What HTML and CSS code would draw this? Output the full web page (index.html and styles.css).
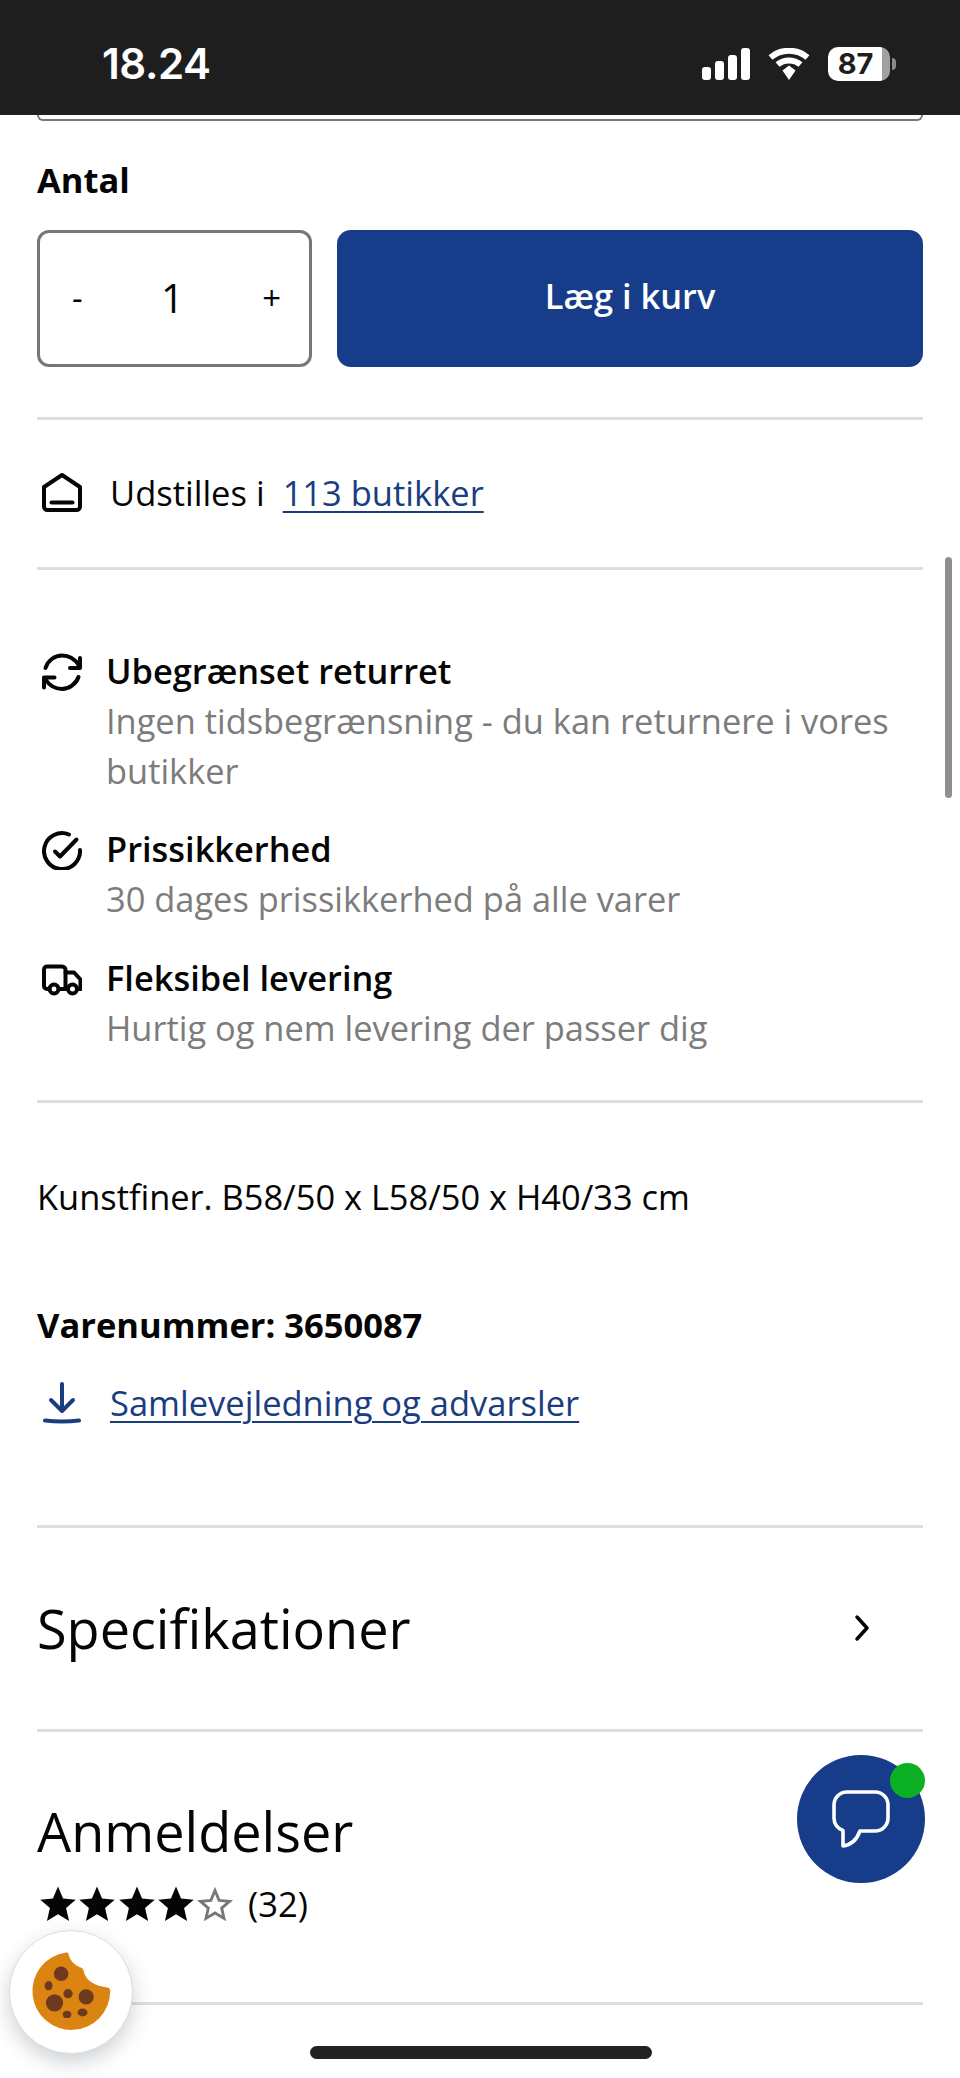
FILE: index.html
```html
<!DOCTYPE html>
<html lang="da">
<head>
<meta charset="utf-8">
<title>Produkt</title>
<link rel="stylesheet" href="styles.css">
</head>
<body>
<div class="phone">
  <header class="status">
    <span class="time">18.24</span>
    <div class="status-icons">
      <svg class="signal" viewBox="0 0 48 32"><rect x="0" y="19" width="9" height="13" rx="3"/><rect x="13" y="13" width="9" height="19" rx="3"/><rect x="26" y="7" width="9" height="25" rx="3"/><rect x="39" y="0" width="9" height="32" rx="3"/></svg>
      <svg class="wifi" viewBox="0 0 42 32"><path d="M2.5 9.5C13 .5 29 .5 39.500 9.500" class="wave"/><path d="M9.500 16.500C16 11 26 11 32.500 16.500" class="wave"/><path d="M14.500 22.500L21 17.500 27.500 22.500 21 32Z" class="wedge"/></svg>
      <div class="battery"><div class="battery-body"><span class="battery-num">87</span></div><span class="battery-nub"></span></div>
    </div>
  </header>

  <main class="content">
    <div class="prev-field"></div>
    <h2 class="qty-label">Antal</h2>
    <div class="buy-row">
      <div class="qty"><span class="qty-btn">-</span><span class="qty-num">1</span><span class="qty-btn">+</span></div>
      <button class="cart">Læg i kurv</button>
    </div>
    <hr class="rule rule-a">
    <div class="stores">
      <svg class="icon icon-home" viewBox="0 0 40 40"><path d="M2 15 20 3 38 15V34.500A3.500 3.500 0 0 1 34.500 38H5.500A3.500 3.500 0 0 1 2 34.500Z"/><path d="M9.500 30.500H30.500"/></svg>
      <span class="stores-text">Udstilles i</span>
      <a class="link stores-link" href="#">113 butikker</a>
    </div>
    <hr class="rule rule-b">
    <ul class="usps">
      <li class="usp">
        <svg class="icon icon-usp" viewBox="0 0 40 40"><path d="M3.500 16C6 8 13 3.500 20 3.500 27 3.500 33 7 37 13.500"/><path d="M38 6V16H28"/><path d="M36.500 25C34 32 27 37 20 37 13 37 7 33 3 27"/><path d="M2 35.500V25.500H12.500"/></svg>
        <div class="usp-body"><div class="usp-title">Ubegrænset returret</div><div class="usp-sub">Ingen tidsbegrænsning - du kan returnere i vores butikker</div></div>
      </li>
      <li class="usp">
        <svg class="icon icon-usp" viewBox="0 0 40 40"><path d="M27 4.500A18 18 0 1 0 38 20"/><path d="M13 21.500 18 26.500 34.500 9.500"/></svg>
        <div class="usp-body"><div class="usp-title">Prissikkerhed</div><div class="usp-sub">30 dages prissikkerhed på alle varer</div></div>
      </li>
      <li class="usp">
        <svg class="icon icon-usp" viewBox="0 0 40 40"><path d="M7.500 30H5A3 3 0 0 1 2 27V10.500A3 3 0 0 1 5 7.500H20A3.500 3.500 0 0 1 23.500 11V30H16.500"/><path d="M23.500 13.500H32L38.500 20.500V30H35"/><circle cx="12" cy="30" r="4.500"/><circle cx="30.500" cy="30" r="4.500"/></svg>
        <div class="usp-body"><div class="usp-title">Fleksibel levering</div><div class="usp-sub">Hurtig og nem levering der passer dig</div></div>
      </li>
    </ul>
    <hr class="rule rule-c">
    <p class="desc">Kunstfiner. B58/50 x L58/50 x H40/33 cm</p>
    <p class="sku">Varenummer: 3650087</p>
    <a class="manual" href="#">
      <svg class="icon icon-dl" viewBox="0 0 38 42"><path d="M19 2V28"/><path d="M8 18 19 29 30 18"/><path d="M2 38.500Q19 40.500 36 38.500"/></svg>
      <span class="link">Samlevejledning og advarsler</span>
    </a>
    <hr class="rule rule-d">
    <div class="acc acc-spec">
      <h2 class="acc-title">Specifikationer</h2>
      <svg class="chev" viewBox="0 0 16 28"><path d="M3 3 13 14 3 25"/></svg>
    </div>
    <hr class="rule">
    <div class="acc-reviews">
      <h2 class="acc-title">Anmeldelser</h2>
      <div class="rating">
        <svg class="star" viewBox="0 0 24 24"><path d="M12 1 15.200 8.600 23.200 9.300 17.100 14.600 19 22.700 12 18.400 5 22.700 6.900 14.600 .8 9.300 8.800 8.600Z"/></svg>
        <svg class="star" viewBox="0 0 24 24"><path d="M12 1 15.200 8.600 23.200 9.300 17.100 14.600 19 22.700 12 18.400 5 22.700 6.900 14.600 .8 9.300 8.800 8.600Z"/></svg>
        <svg class="star" viewBox="0 0 24 24"><path d="M12 1 15.200 8.600 23.200 9.300 17.100 14.600 19 22.700 12 18.400 5 22.700 6.900 14.600 .8 9.300 8.800 8.600Z"/></svg>
        <svg class="star" viewBox="0 0 24 24"><path d="M12 1 15.200 8.600 23.200 9.300 17.100 14.600 19 22.700 12 18.400 5 22.700 6.900 14.600 .8 9.300 8.800 8.600Z"/></svg>
        <svg class="star star-empty" viewBox="0 0 24 24"><path d="M12 3.500 14.600 9.700 21.200 10.300 16.200 14.600 17.700 21.100 12 17.700 6.300 21.100 7.800 14.600 2.800 10.300 9.400 9.700Z"/></svg>
        <span class="count">(32)</span>
      </div>
    </div>
    <hr class="rule">
  </main>

  <div class="scrollbar"></div>
  <div class="home-bar"></div>

  <button class="chat" aria-label="Chat">
    <svg class="chat-icon" viewBox="0 0 128 128"><path d="M78 37H50A13 13 0 0 0 37 50V63A13 13 0 0 0 46 75.500V91C54 90 60 84 63 76H78A13 13 0 0 0 91 63V50A13 13 0 0 0 78 37Z"/></svg>
    <span class="chat-dot"></span>
  </button>

  <div class="cookie">
    <svg class="cookie-icon" viewBox="28 450 370 370">
      <path class="dough" d="M198 515Q206 514 206 522Q212 548 240 560Q250 562 252 574Q262 612 322 621Q332 622 332 632A118 118 0 1 1 198 515Z"/>
      <g class="chips">
        <circle cx="183" cy="580" r="22"/><ellipse cx="145" cy="616" rx="12" ry="14"/><circle cx="204" cy="640" r="14"/><circle cx="259" cy="650" r="23"/><circle cx="163" cy="668" r="26"/><ellipse cx="201" cy="703" rx="13" ry="11"/><ellipse cx="248" cy="697" rx="15" ry="12"/>
      </g>
    </svg>
  </div>
</div>
</body>
</html>
```

FILE: styles.css
```css
* { box-sizing: border-box; }
html, body { margin: 0; padding: 0; background: #fff; }
body { font-family: "Open Sans", "Noto Sans", sans-serif; color: #050505; }

.phone { position: relative; width: 960px; height: 2078px; overflow: hidden; background: #fff; }

.status { height: 115px; background: #1e1e1e; color: #fff; display: flex; align-items: center; justify-content: space-between; padding: 0 64px 0 102px; }
.time { font-family: Inter, sans-serif; font-weight: 600; font-size: 42px; letter-spacing: -0.4px; position: relative; top: 6px; }
.status-icons { display: flex; align-items: center; gap: 18px; margin-top: 13px; }
.signal { width: 48px; height: 32px; fill: #fff; }
.wifi { width: 42px; height: 32px; }
.wave { fill: none; stroke: #fff; stroke-width: 6; }
.wedge { fill: #fff; }
.battery { display: flex; align-items: center; gap: 2px; }
.battery-body { width: 62px; height: 34px; border-radius: 10px; background: linear-gradient(to right, #fff 54px, #a0a0a0 54px); display: flex; justify-content: center; padding-right: 7px; }
.battery-num { color: #1e1e1e; font-family: Inter, sans-serif; font-weight: 700; font-size: 29px; line-height: 34px; }
.battery-nub { width: 4px; height: 12px; background: #8a8a8a; border-radius: 0 4px 4px 0; }

.content { padding: 0 37px; }
.prev-field { height: 6px; border: 2px solid #777; border-top: 0; border-radius: 0 0 10px 10px; }
.qty-label { margin: 39px 0 0; font-size: 34.5px; line-height: 40px; font-weight: 700; }
.buy-row { display: flex; gap: 25px; margin-top: 30px; }
.qty { width: 275px; height: 137px; border: 3px solid #777; border-radius: 12px; display: flex; align-items: center; justify-content: space-between; padding: 0 28px 2px 32px; }
.qty-btn { font-size: 33px; line-height: 1; }
.qty-num { font-size: 40px; line-height: 1; }
.cart { flex: 1; height: 137px; border: 0; border-radius: 14px; background: #163c8a; color: #fff; font: 600 34.4px "Open Sans", sans-serif; padding: 0 0 6px; }

.rule { margin: 0; border: 0; height: 3px; background: #dedede; }
.rule-a { margin-top: 50px; }

.stores { height: 147px; padding-bottom: 3px; display: flex; align-items: center; font-size: 34.5px; }
.icon { fill: none; stroke: #050505; stroke-width: 4; stroke-linecap: round; stroke-linejoin: round; flex: none; }
.icon-home { width: 40px; height: 40px; margin: 0 28px 0 5px; }
.stores-text { margin-right: 18px; }
.link { color: #1a3d80; text-decoration: underline; text-underline-offset: 5px; text-decoration-thickness: 2px; }

.usps { list-style: none; margin: 76px 0 0; padding: 0; }
.usp { display: flex; gap: 24px; margin-bottom: 29px; }
.usp:first-child { margin-bottom: 28px; }
.usp:last-child { margin-bottom: 0; }
.icon-usp { width: 40px; height: 40px; margin: 6px 0 0 5px; }
.usp-title { font-size: 34.4px; line-height: 50px; font-weight: 600; }
.usp-sub { font-size: 34.4px; line-height: 50px; color: #7c7c7c; }

.rule-c { margin-top: 47px; }
.desc { margin: 69px 0 0; font-size: 34.4px; line-height: 50px; }
.sku { margin: 78px 0 0; font-size: 34.5px; line-height: 50px; font-weight: 700; }
.manual { display: flex; align-items: center; margin-top: 28px; font-size: 34.5px; line-height: 50px; text-decoration: none; }
.icon-dl { width: 38px; height: 42px; margin: 0 29px 0 6px; stroke: #1a3d80; }

.rule-d { margin-top: 97px; }
.acc { display: flex; align-items: center; justify-content: space-between; height: 201px; padding-bottom: 2px; }
.acc-title { margin: 0; font-weight: 400; font-size: 54px; line-height: 70px; }
.chev { width: 16px; height: 28px; margin-right: 53px; fill: none; stroke: #050505; stroke-width: 3.5; stroke-linecap: round; stroke-linejoin: round; }

.acc-reviews { height: 270px; padding-top: 64px; }
.rating { display: flex; align-items: center; margin-top: 16px; }
.star { width: 38px; height: 38px; margin-left: 1.5px; fill: #050505; flex: none; }
.star-empty { fill: none; stroke: #777; stroke-width: 1.8; margin-left: 1px; }
.count { font-size: 34.5px; line-height: 44px; margin-left: 14px; }

.scrollbar { position: absolute; left: 945px; top: 557px; width: 7px; height: 241px; border-radius: 4px; background: #8f8f8f; }
.home-bar { position: absolute; left: 310px; top: 2046px; width: 342px; height: 13px; border-radius: 7px; background: #222; }

.chat { position: absolute; left: 797px; top: 1755px; width: 128px; height: 128px; border: 0; padding: 0; border-radius: 50%; background: #163c8a; }
.chat-icon { position: absolute; left: 0; top: 0; width: 128px; height: 128px; fill: none; stroke: #fff; stroke-width: 3.6; stroke-linejoin: round; }
.chat-dot { position: absolute; left: 93px; top: 8px; width: 35px; height: 35px; border-radius: 50%; background: #0cb024; }

.cookie { position: absolute; left: 9px; top: 1930px; width: 124px; height: 124px; border-radius: 50%; background: #fff; border: 1px solid #d5dfe6; box-shadow: 0 8px 20px rgba(60, 70, 80, .25); display: flex; }
.cookie-icon { width: 100%; height: 100%; }
.dough { fill: #db8412; }
.chips { fill: #6e3a1d; }
```
